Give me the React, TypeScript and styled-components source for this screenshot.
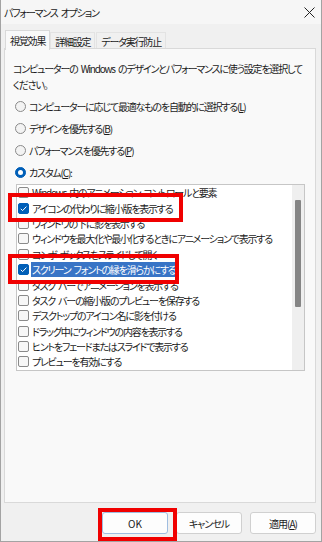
import styled, { createGlobalStyle } from "styled-components";

const GlobalStyle = createGlobalStyle`
  html, body {
    margin: 0;
    padding: 0;
  }
  body {
    background: #f0f0f0;
    font-family: "Noto Sans CJK JP", "Noto Sans", sans-serif;
    font-feature-settings: "palt";
    font-size: 10px;
    letter-spacing: -1.2px;
    word-spacing: 2px;
    color: #1b1b1b;
  }
`;

const Window = styled.div`
  position: relative;
  width: 322px;
  height: 542px;
  box-sizing: border-box;
  border: 1px solid #a3a3a3;
  border-top: none;
  background: #f0f0f0;
  display: flex;
  flex-direction: column;
  overflow: hidden;
`;

const TitleBar = styled.div`
  height: 24px;
  flex-shrink: 0;
  display: flex;
  align-items: center;
  justify-content: space-between;
  padding: 0 6px 0 3px;
  background: #f6f6f6;
  color: #1a1a1a;
`;

const Body = styled.div`
  flex: 1;
  display: flex;
  flex-direction: column;
  padding: 5px 5px 0 3px;
`;

const TabBar = styled.div`
  display: flex;
  align-items: flex-end;
  height: 20px;
  margin-left: 1px;
`;

const Tab = styled.div<{ $active?: boolean }>`
  position: relative;
  z-index: ${(p) => (p.$active ? 2 : 1)};
  box-sizing: border-box;
  height: ${(p) => (p.$active ? "20px" : "17px")};
  margin-bottom: ${(p) => (p.$active ? "-1px" : "0")};
  padding: 0 4px 0 4px;
  display: flex;
  align-items: center;
  background: ${(p) => (p.$active ? "#f9f9f9" : "#f0f0f0")};
  border: 1px solid ${(p) => (p.$active ? "#d9d9d9" : "#e3e3e3")};
  border-bottom: none;
  margin-right: ${(p) => (p.$active ? "0" : "1px")};
`;

const Panel = styled.div`
  position: relative;
  z-index: 1;
  height: 455px;
  box-sizing: border-box;
  margin-top: -1px;
  border: 1px solid #d9d9d9;
  background: #f9f9f9;
  padding: 12px 0 0 8px;
  display: flex;
  flex-direction: column;
`;

const Description = styled.p`
  margin: 0;
  line-height: 16px;
  white-space: nowrap;
`;

const RadioGroup = styled.div`
  margin-top: 2px;
  display: flex;
  flex-direction: column;
`;

const RadioRow = styled.label`
  height: 22px;
  display: flex;
  align-items: center;
  gap: 3px;
  padding-left: 2px;
`;

const RadioDot = styled.span<{ $checked?: boolean }>`
  width: 11px;
  height: 11px;
  box-sizing: border-box;
  border-radius: 50%;
  border: 1px solid ${(p) => (p.$checked ? "#005fb8" : "#8a8a8a")};
  background: ${(p) => (p.$checked ? "#005fb8" : "#f3f3f3")};
  display: flex;
  align-items: center;
  justify-content: center;
  &::after {
    content: "";
    display: ${(p) => (p.$checked ? "block" : "none")};
    width: 5px;
    height: 5px;
    border-radius: 50%;
    background: #ffffff;
  }
`;

const Key = styled.span`
  text-decoration: underline;
`;

const ListBox = styled.div`
  margin: 1px 0 0 3px;
  width: 289px;
  height: 187px;
  box-sizing: border-box;
  border: 1px solid #c6c6c6;
  background: #ffffff;
  display: flex;
`;

const Rows = styled.div`
  flex: 1;
  overflow: hidden;
  display: flex;
  flex-direction: column;
`;

const Row = styled.div`
  height: 15.4px;
  flex-shrink: 0;
  display: flex;
  align-items: center;
  padding-left: 1px;
  white-space: nowrap;
`;

const Box = styled.span<{ $checked?: boolean }>`
  width: 11px;
  height: 11px;
  flex-shrink: 0;
  box-sizing: border-box;
  border-radius: 2px;
  border: 1px solid ${(p) => (p.$checked ? "#005fb8" : "#8a8a8a")};
  background: ${(p) => (p.$checked ? "#005fb8" : "#f7f7f7")};
  display: flex;
  align-items: center;
  justify-content: center;
  margin-right: 2px;
`;

const RowLabel = styled.span<{ $selected?: boolean }>`
  padding: 0 1px;
  line-height: 15px;
  background: ${(p) => (p.$selected ? "#3874c6" : "transparent")};
  color: ${(p) => (p.$selected ? "#ffffff" : "inherit")};
`;

const ScrollTrack = styled.div`
  width: 12px;
  background: #efefef;
  padding: 15px 0 0 3px;
  box-sizing: border-box;
`;

const ScrollThumb = styled.div`
  width: 6px;
  height: 107px;
  background: #858585;
  border-radius: 1px;
`;

const Footer = styled.div`
  display: flex;
  justify-content: flex-end;
  gap: 8px;
  padding-top: 9px;
`;

const Button = styled.button<{ $primary?: boolean }>`
  width: 66px;
  height: 22px;
  box-sizing: border-box;
  border: 1px solid ${(p) => (p.$primary ? "#9fbde0" : "#d0d0d0")};
  border-radius: 3px;
  background: #fdfdfd;
  font-family: inherit;
  font-feature-settings: "palt";
  font-size: 10px;
  letter-spacing: ${(p) => (p.$primary ? "0" : "-1px")};
  color: #1b1b1b;
  padding: 0;
`;

const Mark = styled.div<{ $l: number; $t: number; $w: number; $h: number }>`
  position: absolute;
  z-index: 5;
  left: ${(p) => p.$l}px;
  top: ${(p) => p.$t}px;
  width: ${(p) => p.$w}px;
  height: ${(p) => p.$h}px;
  box-sizing: border-box;
  border: 4px solid #f00000;
  pointer-events: none;
`;

const CloseIcon = () => (
  <svg width="11" height="11" viewBox="0 0 11 11">
    <path d="M0.5 0.5 L10.5 10.5 M10.5 0.5 L0.5 10.5" stroke="#222" strokeWidth="1" />
  </svg>
);

const Check = () => (
  <svg width="9" height="9" viewBox="0 0 9 9">
    <path d="M1.8 4.8 L3.6 6.6 L7.4 2.6" stroke="#fff" strokeWidth="1" fill="none" />
  </svg>
);

const items = [
  { label: "Windows 内のアニメーション コントロールと要素", checked: false },
  { label: "アイコンの代わりに縮小版を表示する", checked: true },
  { label: "ウィンドウの下に影を表示する", checked: false },
  { label: "ウィンドウを最大化や最小化するときにアニメーションで表示する", checked: false },
  { label: "コンボ ボックスをスライドして開く", checked: false },
  { label: "スクリーン フォントの縁を滑らかにする", checked: true, selected: true },
  { label: "タスク バーでアニメーションを表示する", checked: false },
  { label: "タスク バーの縮小版のプレビューを保存する", checked: false },
  { label: "デスクトップのアイコン名に影を付ける", checked: false },
  { label: "ドラッグ中にウィンドウの内容を表示する", checked: false },
  { label: "ヒントをフェードまたはスライドで表示する", checked: false },
  { label: "プレビューを有効にする", checked: false },
];

export default function App() {
  return (
    <>
      <GlobalStyle />
      <Window>
        <TitleBar>
          <span>パフォーマンス オプション</span>
          <CloseIcon />
        </TitleBar>
        <Body>
          <TabBar>
            <Tab $active>視覚効果</Tab>
            <Tab>詳細設定</Tab>
            <Tab>データ実行防止</Tab>
          </TabBar>
          <Panel>
            <Description>
              コンピューターの Windows のデザインとパフォーマンスに使う設定を選択して
              <br />
              ください。
            </Description>
            <RadioGroup>
              <RadioRow>
                <RadioDot />
                <span>
                  コンピューターに応じて最適なものを自動的に選択する(<Key>L</Key>)
                </span>
              </RadioRow>
              <RadioRow>
                <RadioDot />
                <span>
                  デザインを優先する(<Key>B</Key>)
                </span>
              </RadioRow>
              <RadioRow>
                <RadioDot />
                <span>
                  パフォーマンスを優先する(<Key>P</Key>)
                </span>
              </RadioRow>
              <RadioRow>
                <RadioDot $checked />
                <span>
                  カスタム(<Key>C</Key>):
                </span>
              </RadioRow>
            </RadioGroup>
            <ListBox>
              <Rows>
                {items.map((it) => (
                  <Row key={it.label}>
                    <Box $checked={it.checked}>{it.checked && <Check />}</Box>
                    <RowLabel $selected={it.selected}>{it.label}</RowLabel>
                  </Row>
                ))}
              </Rows>
              <ScrollTrack>
                <ScrollThumb />
              </ScrollTrack>
            </ListBox>
          </Panel>
          <Footer>
            <Button $primary>OK</Button>
            <Button>キャンセル</Button>
            <Button>
              適用(<Key>A</Key>)
            </Button>
          </Footer>
        </Body>
        <Mark $l={7} $t={193} $w={175} $h={29} />
        <Mark $l={7} $t={254} $w={171} $h={30} />
        <Mark $l={97} $t={508} $w={79} $h={33} />
      </Window>
    </>
  );
}
